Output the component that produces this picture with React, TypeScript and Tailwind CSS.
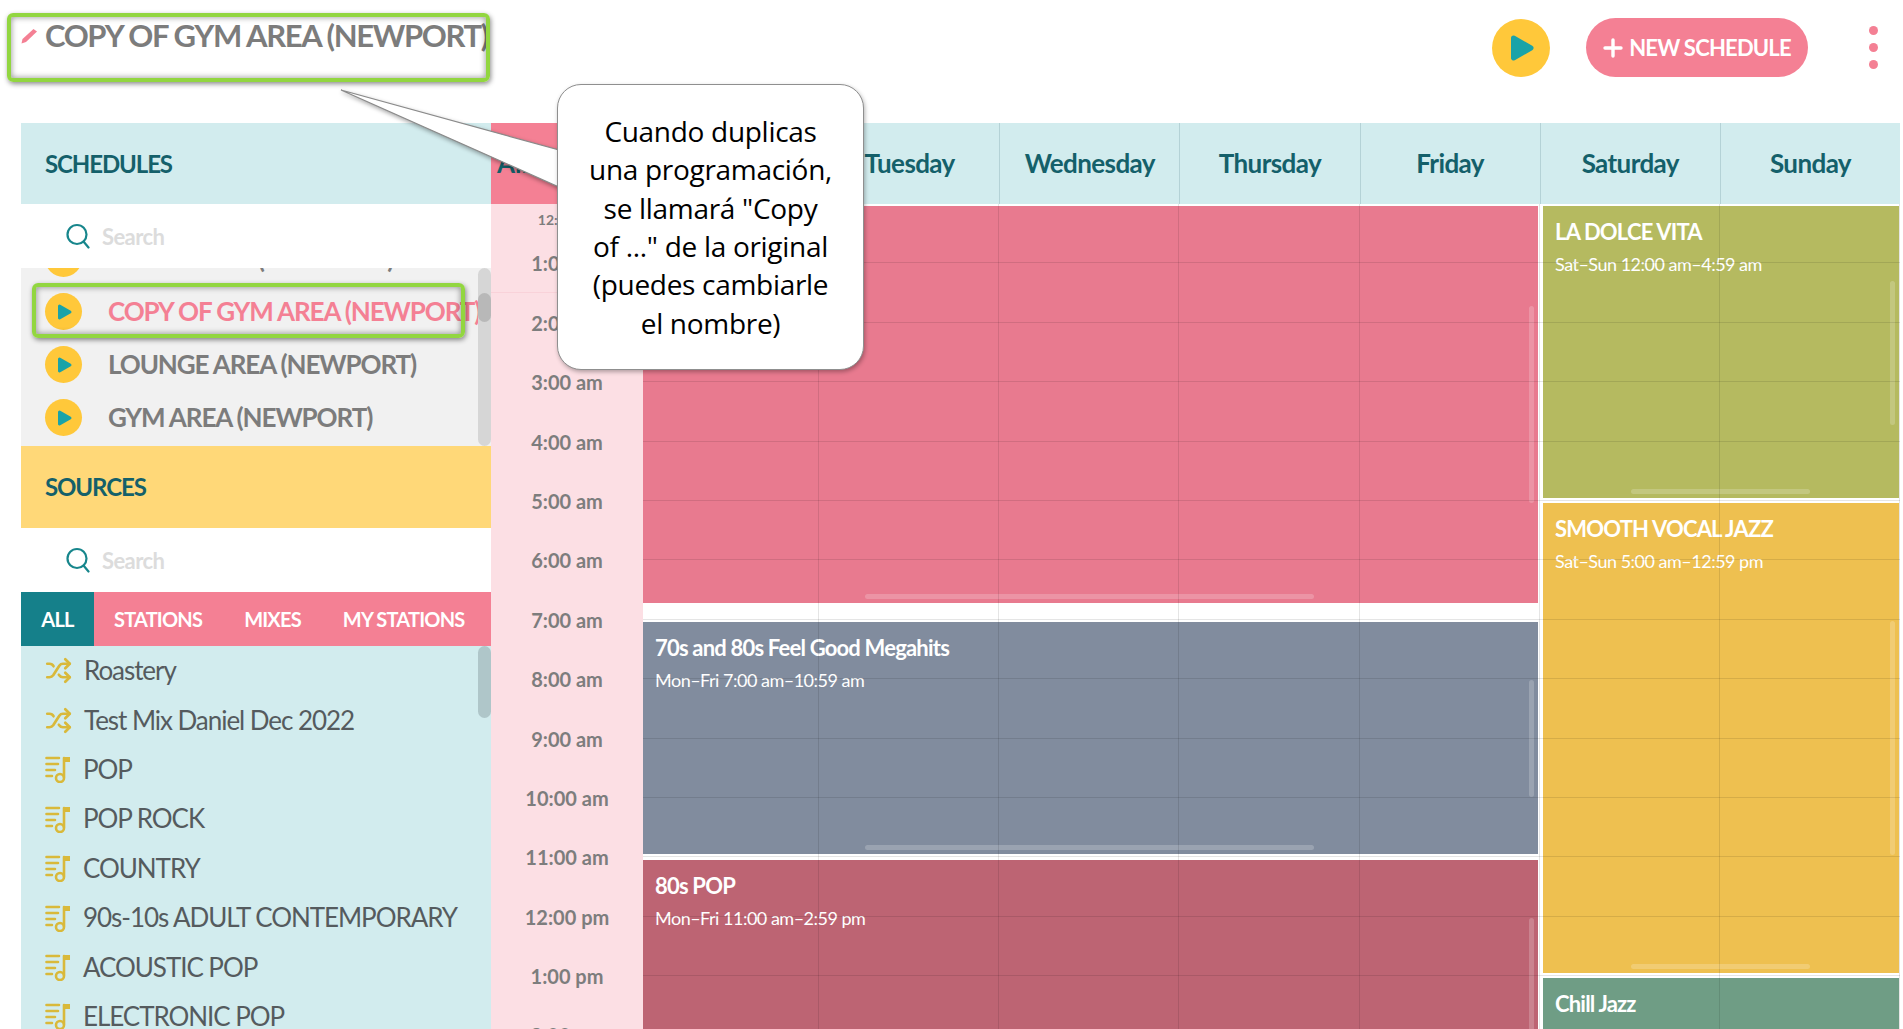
import React from "react";
import { Shuffle } from "lucide-react";

const Play = ({ size, cls }: { size: number; cls: string }) => (
  <div className={`flex items-center justify-center rounded-full bg-[#ffc83a] shrink-0 ${cls}`}>
    <svg width={size} height={size} viewBox="0 0 24 24">
      <path d="M6 4 L20 12 L6 20 Z" fill="#1aa3a8" stroke="#1aa3a8" strokeWidth="4" strokeLinejoin="round" />
    </svg>
  </div>
);

const SearchIcon = () => (
  <svg width="24" height="26" viewBox="0 0 24 26" fill="none" stroke="#17868c" strokeWidth="2.2" strokeLinecap="round">
    <ellipse cx="11" cy="11.5" rx="9.5" ry="9.5" />
    <path d="M17.5 18.5 L22.5 24.5" />
  </svg>
);

const MusicIcon = () => (
  <svg width="26" height="28" viewBox="0 0 26 28" fill="none" stroke="#d9b93a" strokeWidth="2.6" strokeLinecap="round">
    <path d="M1.5 3 H14 M1.5 9 H13 M1.5 15 H10 M1.5 21 H7" />
    <path d="M19 3 V22" />
    <path d="M19 2 H25 V7 H19 Z" fill="#d9b93a" stroke="none" />
    <circle cx="15" cy="23" r="4" />
  </svg>
);

const SearchRow = () => (
  <div className="h-[64px] bg-white flex items-center pl-[45px] gap-[12px]">
    <SearchIcon />
    <span className="text-[22px] font-bold text-[#dcdcdc] tracking-[-0.6px]">Search</span>
  </div>
);

const Row = ({ name, active }: { name: string; active?: boolean }) => (
  <div className="h-[53px] flex items-center pl-[24px] gap-[26px] shrink-0">
    <Play size={18} cls="w-[37px] h-[37px]" />
    <span className={`text-[26px] font-bold tracking-[-1.1px] whitespace-nowrap ${active ? "text-[#f48094]" : "text-[#7c7c7c]"}`}>{name}</span>
  </div>
);

const sources: [string, boolean][] = [
  ["Roastery", true],
  ["Test Mix Daniel Dec 2022", true],
  ["POP", false],
  ["POP ROCK", false],
  ["COUNTRY", false],
  ["90s-10s ADULT CONTEMPORARY", false],
  ["ACOUSTIC POP", false],
  ["ELECTRONIC POP", false],
];

const times = ["3:00 am","4:00 am","5:00 am","6:00 am","7:00 am","8:00 am","9:00 am","10:00 am","11:00 am","12:00 pm","1:00 pm","2:00 pm"];
const days = ["Tuesday", "Wednesday", "Thursday", "Friday", "Saturday", "Sunday"];

const Event = ({ h, bg, title, sub, hbar, vbar }: { h: string; bg: string; title: string; sub: string; hbar?: string; vbar?: string }) => (
  <div className={`relative shrink-0 pl-[12px] pt-[12px] text-white overflow-hidden ${h} ${bg}`}>
    <div className="text-[22px] font-bold tracking-[-0.8px] leading-[28px] whitespace-nowrap">{title}</div>
    <div className="text-[18px] tracking-[-0.5px] leading-[24px] mt-[6px] whitespace-nowrap">{sub}</div>
    {hbar && <div className={`absolute bottom-[4px] h-[5px] rounded-full bg-white/20 ${hbar}`} />}
    {vbar && <div className={`absolute right-[4px] w-[5px] rounded-full bg-white/20 ${vbar}`} />}
  </div>
);

export default function App() {
  return (
    <div className="relative w-[1903px] h-[1029px] overflow-hidden bg-white font-['Lato',sans-serif]">
      {/* top bar */}
      <div className="h-[123px] flex items-start pl-[21px]">
        <div className="flex items-center gap-[7px] h-[70px]">
          <svg width="17" height="16" viewBox="0 0 17 16" className="mt-[1px]">
            <path d="M12.5 1 L16 3.5 L5 14 L0.5 15.5 L1.5 11 Z" fill="#f48094" />
          </svg>
          <span className="text-[31px] font-bold text-[#7c7c7c] tracking-[-1.35px] whitespace-nowrap">COPY OF GYM AREA (NEWPORT)</span>
        </div>
        <div className="ml-auto flex items-center h-[95px] pr-[25px]">
          <Play size={30} cls="w-[58px] h-[58px]" />
          <div className="ml-[36px] w-[222px] h-[59px] rounded-full bg-[#f48094] flex items-center justify-center gap-[6px] text-white text-[22px] font-bold tracking-[-0.8px]">
            <svg width="20" height="20" viewBox="0 0 20 20" stroke="white" strokeWidth="3.4" strokeLinecap="round"><path d="M10 2 V18 M2 10 H18" /></svg>
            NEW SCHEDULE
          </div>
          <div className="ml-[61px] flex flex-col gap-[8px]">
            <div className="w-[9px] h-[9px] rounded-full bg-[#f48094]" />
            <div className="w-[9px] h-[9px] rounded-full bg-[#f48094]" />
            <div className="w-[9px] h-[9px] rounded-full bg-[#f48094]" />
          </div>
        </div>
      </div>

      <div className="flex h-[906px] pl-[21px]">
        {/* sidebar */}
        <div className="w-[470px] shrink-0 flex flex-col">
          <div className="h-[81px] bg-[#d2ecee] flex items-center pl-[24px] text-[24px] font-bold text-[#14606a] tracking-[-1.1px]">SCHEDULES</div>
          <SearchRow />
          <div className="relative h-[178px] bg-[#f1f1f1] overflow-hidden flex flex-col">
            <div className="-mt-[36px]">
              <Row name="LOBBY AREA (NEWPORT)" />
              <Row name="COPY OF GYM AREA (NEWPORT)" active />
              <Row name="LOUNGE AREA (NEWPORT)" />
              <Row name="GYM AREA (NEWPORT)" />
            </div>
            <div className="absolute right-0 inset-y-0 w-[13px] rounded-full bg-[#d6d6d6]">
              <div className="mt-[25px] h-[29px] rounded-full bg-[#b8b8b8]" />
            </div>
          </div>
          <div className="h-[82px] bg-[#ffd878] flex items-center pl-[24px] text-[24px] font-bold text-[#14606a] tracking-[-1.1px]">SOURCES</div>
          <SearchRow />
          <div className="h-[54px] bg-[#f48094] flex items-center text-white text-[20px] font-bold tracking-[-0.8px]">
            <div className="w-[73px] h-full bg-[#15808a] flex items-center justify-center">ALL</div>
            <span className="ml-[20px]">STATIONS</span>
            <span className="ml-[42px]">MIXES</span>
            <span className="ml-[42px]">MY STATIONS</span>
          </div>
          <div className="relative flex-1 bg-[#d2ecee] overflow-hidden pl-[24px]">
            {sources.map(([name, mix]) => (
              <div key={name} className="h-[49.4px] flex items-center gap-[12px]">
                {mix ? <Shuffle size={27} color="#d9b93a" strokeWidth={2.4} /> : <MusicIcon />}
                <span className="text-[26px] text-[#555b5e] tracking-[-1.05px] whitespace-nowrap">{name}</span>
              </div>
            ))}
            <div className="absolute right-0 top-0 w-[13px] h-[72px] rounded-b-full rounded-t-full bg-[#afc6c9]" />
          </div>
        </div>

        {/* calendar */}
        <div className="flex-1 flex flex-col min-w-0">
          <div className="h-[81px] flex pr-[3px]">
            <div className="w-[152px] bg-[#f48094] flex items-center pl-[6px] text-[26px] font-bold text-[#14606a]">All</div>
            <div className="w-[176px] bg-[#d2ecee] flex items-center justify-center text-[26px] font-bold text-[#14606a]">Monday</div>
            {days.map((d) => (
              <div key={d} className="flex-1 bg-[#d2ecee] border-l border-[#b4d2d6] flex items-center justify-center text-[26px] font-bold text-[#14606a] tracking-[-0.6px]">{d}</div>
            ))}
          </div>
          <div className="relative flex-1 flex overflow-hidden pr-[3px]">
            {/* time column */}
            <div className="w-[152px] shrink-0 bg-[#fcdfe4] flex flex-col items-stretch text-center font-bold text-[#7d7d7d]">
              <div className="h-[29.7px] shrink-0 pt-[8px] text-[14px] leading-[16px]">12:00 am</div>
              <div className="h-[59.4px] shrink-0 flex items-center justify-center text-[20px] border-b border-[#f9d2d9]">1:00 am</div>
              <div className="h-[59.4px] shrink-0 flex items-center justify-center text-[20px]">2:00 am</div>
              {times.map((t) => (
                <div key={t} className="h-[59.4px] shrink-0 flex items-center justify-center text-[20px]">{t}</div>
              ))}
            </div>
            {/* events */}
            <div className="relative flex-1 flex min-w-0">
              <div className="w-[895px] shrink-0 flex flex-col pt-[2px]">
                <Event h="h-[397px]" bg="bg-[#e87a8f]" title="Chill Pop Instrumentals" sub="Mon–Fri 12:00 am–6:59 am" hbar="left-[222px] w-[449px]" vbar="top-[100px] h-[197px]" />
                <div className="h-[19px] shrink-0" />
                <Event h="h-[232px]" bg="bg-[#818c9e]" title="70s and 80s Feel Good Megahits" sub="Mon–Fri 7:00 am–10:59 am" hbar="left-[222px] w-[449px]" vbar="top-[58px] h-[117px]" />
                <div className="h-[6px] shrink-0" />
                <Event h="h-[240px]" bg="bg-[#bd6473]" title="80s POP" sub="Mon–Fri 11:00 am–2:59 pm" vbar="top-[58px] h-[182px]" />
              </div>
              <div className="ml-[5px] w-[356px] shrink-0 flex flex-col pt-[2px]">
                <Event h="h-[292px]" bg="bg-[#b5ba60]" title="LA DOLCE VITA" sub="Sat–Sun 12:00 am–4:59 am" hbar="left-[88px] w-[179px]" vbar="top-[75px] h-[144px]" />
                <div className="h-[5px] shrink-0" />
                <Event h="h-[470px]" bg="bg-[#eec050]" title="SMOOTH VOCAL JAZZ" sub="Sat–Sun 5:00 am–12:59 pm" hbar="left-[88px] w-[179px]" vbar="top-[118px] h-[234px]" />
                <div className="h-[5px] shrink-0" />
                <Event h="h-[80px]" bg="bg-[#6f9d85]" title="Chill Jazz" sub="Sat–Sun 1:00 pm–11:59 pm" />
              </div>
              {/* grid lines lying over the events */}
              <div className="absolute inset-0 pointer-events-none flex">
                {[0, 1, 2, 3, 4, 5, 6].map((i) => (
                  <div key={i} className={`${i === 0 ? "w-[176px]" : "flex-1"} border-r border-black/10`} />
                ))}
              </div>
              <div className="absolute inset-0 pointer-events-none flex flex-col">
                {Array.from({ length: 14 }).map((_, i) => (
                  <div key={i} className="h-[59.4px] shrink-0 border-b border-black/10" />
                ))}
              </div>
            </div>
          </div>
        </div>
      </div>

      {/* annotation: callout with tail */}
      <svg className="absolute left-[330px] top-[80px] pointer-events-none" width="240" height="120" viewBox="0 0 240 120">
        <path d="M11 10 L229 70 L229 107 Z" fill="white" stroke="#8a8a8a" strokeWidth="1.2" className="drop-shadow-[1px_2px_2px_rgba(0,0,0,0.35)]" />
      </svg>
      <div className="absolute left-[557px] top-[84px] w-[307px] h-[286px] bg-white border border-[#8f8f8f] rounded-[24px] shadow-[1px_2px_4px_rgba(0,0,0,0.3)] flex items-center justify-center text-center text-black text-[28px] leading-[38.3px] font-['Open_Sans',sans-serif] tracking-[-0.3px]">
        <div>Cuando duplicas<br />una programación,<br />se llamará "Copy<br />of ..." de la original<br />(puedes cambiarle<br />el nombre)</div>
      </div>

      {/* annotation: green highlights */}
      <div className="absolute left-[7px] top-[13px] w-[483px] h-[69px] border-[4px] border-[#92d640] rounded-[6px] shadow-[1px_2px_5px_rgba(0,0,0,0.45),inset_0_0_6px_rgba(0,0,0,0.45)]" />
      <div className="absolute left-[32px] top-[283px] w-[433px] h-[55px] border-[4px] border-[#92d640] rounded-[6px] shadow-[1px_2px_5px_rgba(0,0,0,0.45),inset_0_0_6px_rgba(0,0,0,0.45)]" />
    </div>
  );
}
